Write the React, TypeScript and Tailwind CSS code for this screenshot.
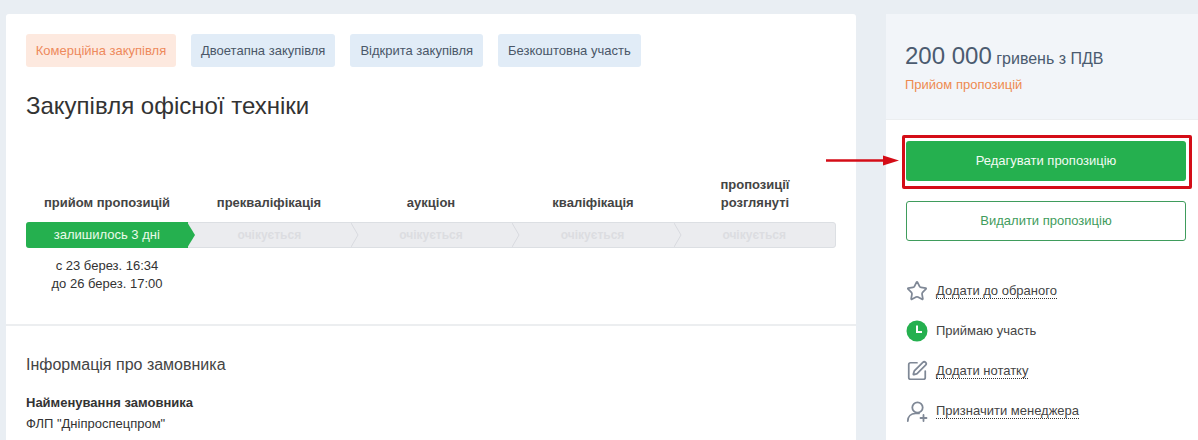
import { Star, SquarePen } from "lucide-react";

const tags = ["Двоетапна закупівля", "Відкрита закупівля", "Безкоштовна участь"];

const steps = [
  { title: "прийом пропозицій", status: "залишилось 3 дні" },
  { title: "прекваліфікація", status: "очікується" },
  { title: "аукціон", status: "очікується" },
  { title: "кваліфікація", status: "очікується" },
  { title: "пропозиції розглянуті", status: "очікується" },
];

function ClockBadge() {
  return (
    <svg width="22" height="22" viewBox="0 0 22 22" className="shrink-0">
      <circle cx="11" cy="11" r="10.5" fill="#25b04f" />
      <path d="M11 5.5V12H16" fill="none" stroke="#fff" strokeWidth="2" />
    </svg>
  );
}

function ManagerIcon() {
  return (
    <svg width="22" height="22" viewBox="0 0 22 22" fill="none" stroke="#7f8896" strokeWidth="1.8" strokeLinecap="round" className="shrink-0">
      <circle cx="11.5" cy="7.5" r="5.2" />
      <path d="M1.8 21C1.8 16.5 5 13.6 9.5 13.4H13" />
      <path d="M17.5 15V21M14.5 18H20.5" />
    </svg>
  );
}

function DottedLink({ children }: { children: string }) {
  return <span className="border-b border-dotted border-[#333] leading-[15px] text-[13px] text-[#444]">{children}</span>;
}

export default function App() {
  return (
    <div className="h-[440px] w-[1198px] overflow-hidden bg-[#e9eef3] font-['Liberation_Sans',sans-serif] flex pt-[14px] pl-[6px] gap-[30px]">
      {/* Main card */}
      <div className="w-[850px] h-[500px] shrink-0 bg-white rounded-t-[3px]">
        <div className="h-[312px] border-b-2 border-[#eceef0] px-5 pt-5">
          <div className="flex gap-[15px]">
            <span className="w-[150px] h-[33px] flex items-center justify-center rounded-[3px] bg-[#fde9df] text-[13px] text-[#ee8a5c]">Комерційна закупівля</span>
            {tags.map((tag) => (
              <span key={tag} className="h-[33px] px-[10px] flex items-center rounded-[3px] bg-[#e1ecf7] text-[13px] text-[#4a5768]">{tag}</span>
            ))}
          </div>
          <h1 className="mt-[24px] text-[24px] leading-[30px] text-[#333]">Закупівля офісної техніки</h1>

          {/* Steps */}
          <div className="mt-[51px] flex w-[810px]">
            {steps.map((step) => (
              <div key={step.title} className="w-[162px] h-[46px] flex items-end justify-center pb-[6px]">
                <div className="w-[104px] text-center">
                  <span className={step.title.length > 20 ? "block text-[13px] leading-[18px] font-bold text-[#444]" : "block -mx-6 text-[13px] leading-[18px] font-bold text-[#444]"}>{step.title}</span>
                </div>
              </div>
            ))}
          </div>
          <div className="mt-[4px] w-[810px] h-[26px] flex rounded-[3px] border border-[#dcdfe3] bg-[#ebecef]">
            {steps.map((step, i) => (
              <div key={step.title} className="relative w-[162px] flex items-center justify-center">
                {i === 0 && <div className="absolute -left-px -top-px -bottom-px right-[1px] bg-[#25b04f] rounded-l-[3px]" />}
                {i === 0 && (
                  <svg width="8" height="26" viewBox="0 0 8 26" className="absolute -top-px left-[160px]">
                    <path d="M0 0L8 13L0 26Z" fill="#25b04f" />
                  </svg>
                )}
                {i > 0 && i < 4 && (
                  <svg width="8" height="24" viewBox="0 0 8 24" className="absolute top-0 left-[162px]">
                    <path d="M0 0L7 12L0 24" fill="none" stroke="#d8dadf" />
                  </svg>
                )}
                <span className={i === 0 ? "relative -left-px text-[13px] text-[#eafbe9]" : "relative text-[12px] font-bold text-[#dcdde1]"}>{step.status}</span>
              </div>
            ))}
          </div>
          <div className="w-[162px] mt-[9px] text-center text-[13px] leading-[18px] text-[#333]">
            <p>с 23 берез. 16:34</p>
            <p>до 26 берез. 17:00</p>
          </div>
        </div>

        {/* Customer info */}
        <div className="px-5 pt-[29px]">
          <h2 className="text-[16px] leading-[20px] text-[#444]">Інформація про замовника</h2>
          <p className="mt-[20px] text-[13px] leading-[16px] font-bold text-[#333]">Найменування замовника</p>
          <p className="mt-[5px] text-[13px] leading-[16px] text-[#333]">ФЛП "Дніпроспецпром"</p>
        </div>
      </div>

      {/* Side card */}
      <div className="relative w-[312px] shrink-0 bg-white">
        <div className="h-[106px] bg-[#f2f5f9] border-b border-[#eceef0] pl-[19px] pt-[27px]">
          <p className="leading-[30px] text-[#4b5b70]">
            <span className="text-[24px]">200 000</span>
            <span className="text-[16px]"> гривень з ПДВ</span>
          </p>
          <p className="mt-[2px] text-[13px] leading-[18px] text-[#ee8a4f]">Прийом пропозицій</p>
        </div>

        <div className="pl-5 pr-3 pt-[21px]">
          <button className="w-[280px] h-[40px] block rounded-[3px] bg-[#25b04f] text-[13px] text-[#f2fbf3]">Редагувати пропозицію</button>
          <button className="mt-5 w-[280px] h-[40px] block rounded-[3px] border border-[#3f9c5c] bg-white text-[13px] text-[#3f9c5c]">Видалити пропозицію</button>

          <div className="mt-[39px] flex flex-col gap-[18px]">
            <div className="flex items-center h-[22px] gap-[8px]">
              <Star className="w-[22px] h-[22px] text-[#7f8896] shrink-0" strokeWidth={1.9} />
              <DottedLink>Додати до обраного</DottedLink>
            </div>
            <div className="flex items-center h-[22px] gap-[8px]">
              <ClockBadge />
              <span className="text-[13px] text-[#444]">Приймаю участь</span>
            </div>
            <div className="flex items-center h-[22px] gap-[8px]">
              <SquarePen className="w-[22px] h-[22px] text-[#7f8896] shrink-0" strokeWidth={1.9} />
              <DottedLink>Додати нотатку</DottedLink>
            </div>
            <div className="flex items-center h-[22px] gap-[8px]">
              <ManagerIcon />
              <DottedLink>Призначити менеджера</DottedLink>
            </div>
          </div>
        </div>

        {/* Annotation */}
        <div className="absolute left-[16px] top-[121px] w-[290px] h-[54px] border-[3px] border-[#d40d17] rounded-[2px]" />
        <svg width="76" height="14" viewBox="0 0 76 14" className="absolute -left-[60px] top-[139px]">
          <path d="M0 7.5H58" stroke="#d40d17" strokeWidth="2.5" />
          <path d="M57 2.5L73 7.5L57 12.5Z" fill="#d40d17" />
        </svg>
      </div>
    </div>
  );
}
